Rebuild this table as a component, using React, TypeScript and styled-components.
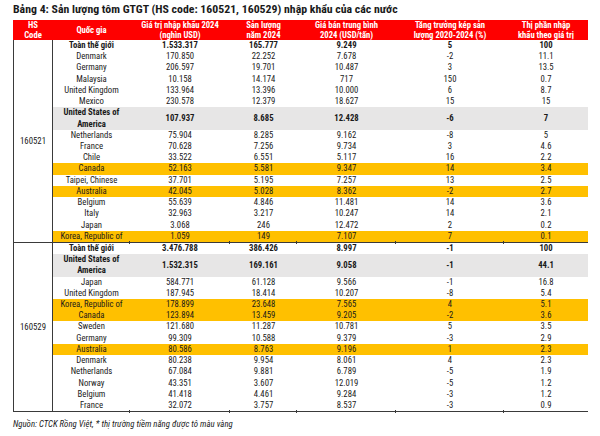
import React from "react";
import styled, { createGlobalStyle } from "styled-components";

const GlobalStyle = createGlobalStyle`
  html, body { margin: 0; padding: 0; background: #ffffff; }
  body {
    font-family: "Roboto Condensed", "Liberation Sans", Arial, sans-serif;
    color: #1a1a1a;
  }
`;

const ROW_H = 11.22;
const COLS = "77px 100px 67px 99px 108px 84px";

const Page = styled.div`
  width: 600px;
  height: 436px;
  box-sizing: border-box;
  padding: 2px 12px 0 13px;
`;

const Title = styled.div`
  font-size: 11.8px;
  font-weight: 700;
  line-height: 14px;
  color: #1a1a1a;
  margin-bottom: 3.5px;
  white-space: nowrap;
`;

const Header = styled.div`
  display: grid;
  grid-template-columns: 40px ${COLS};
  width: 575px;
  height: 20.5px;
  background: #fe0000;
`;

const HeadCell = styled.div`
  display: flex;
  align-items: center;
  justify-content: center;
  text-align: center;
  color: #ffffff;
  font-weight: 700;
  font-size: 8.6px;
  line-height: 10px;
  white-space: nowrap;
`;

const Section = styled.div`
  display: flex;
  width: 575px;
  border-bottom: 1px solid #3a3a3a;
`;

const HsCell = styled.div`
  width: 40px;
  box-sizing: border-box;
  border-left: 1px solid #3a3a3a;
  border-right: 1px solid #3a3a3a;
  display: flex;
  align-items: center;
  justify-content: center;
  font-size: 8.8px;
`;

const Rows = styled.div`
  flex: 1;
  display: flex;
  flex-direction: column;
`;

type Tone = "plain" | "gray" | "yellow";

const Row = styled.div<{ $tone: Tone; $span: number; $bold: boolean }>`
  display: grid;
  grid-template-columns: ${COLS};
  height: ${(p) => p.$span * ROW_H}px;
  background: ${(p) =>
    p.$tone === "gray" ? "#e7e6e6" : p.$tone === "yellow" ? "#ffc000" : "transparent"};
  font-weight: ${(p) => (p.$bold ? 700 : 400)};
  font-size: 8.7px;
`;

const Cell = styled.div<{ $tick?: boolean }>`
  position: relative;
  display: flex;
  align-items: center;
  justify-content: center;
  text-align: center;
  line-height: ${ROW_H}px;
  white-space: nowrap;
  ${(p) =>
    p.$tick
      ? `&::after {
    content: "";
    position: absolute;
    right: 0;
    bottom: -2px;
    width: 1px;
    height: 3px;
    background: #3a3a3a;
  }`
      : ""}
`;

const Note = styled.div`
  margin-top: 6px;
  font-size: 8.8px;
  font-style: italic;
  line-height: 12px;
  color: #1a1a1a;
  white-space: nowrap;
`;

type R = {
  name: string;
  vals: string[];
  tone?: Tone;
  bold?: boolean;
  span?: number;
};

const s1: R[] = [
  { name: "Toàn thế giới", vals: ["1.533.317", "165.777", "9.249", "5", "100"], bold: true },
  { name: "Denmark", vals: ["170.850", "22.252", "7.678", "-2", "11.1"] },
  { name: "Germany", vals: ["206.597", "19.701", "10.487", "3", "13.5"] },
  { name: "Malaysia", vals: ["10.158", "14.174", "717", "150", "0.7"] },
  { name: "United Kingdom", vals: ["133.964", "13.396", "10.000", "6", "8.7"] },
  { name: "Mexico", vals: ["230.578", "12.379", "18.627", "15", "15"] },
  { name: "United States of\nAmerica", vals: ["107.937", "8.685", "12.428", "-6", "7"], tone: "gray", bold: true, span: 2 },
  { name: "Netherlands", vals: ["75.904", "8.285", "9.162", "-8", "5"] },
  { name: "France", vals: ["70.628", "7.256", "9.734", "3", "4.6"] },
  { name: "Chile", vals: ["33.522", "6.551", "5.117", "16", "2.2"] },
  { name: "Canada", vals: ["52.163", "5.581", "9.347", "14", "3.4"], tone: "yellow" },
  { name: "Taipei, Chinese", vals: ["37.701", "5.195", "7.257", "13", "2.5"] },
  { name: "Australia", vals: ["42.045", "5.028", "8.362", "-2", "2.7"], tone: "yellow" },
  { name: "Belgium", vals: ["55.639", "4.846", "11.481", "14", "3.6"] },
  { name: "Italy", vals: ["32.963", "3.217", "10.247", "14", "2.1"] },
  { name: "Japan", vals: ["3.068", "246", "12.472", "2", "0.2"] },
  { name: "Korea, Republic of", vals: ["1.059", "149", "7.107", "7", "0.1"], tone: "yellow" },
];

const s2: R[] = [
  { name: "Toàn thế giới", vals: ["3.476.788", "386.426", "8.997", "-1", "100"], bold: true },
  { name: "United States of\nAmerica", vals: ["1.532.315", "169.161", "9.058", "-1", "44.1"], tone: "gray", bold: true, span: 2 },
  { name: "Japan", vals: ["584.771", "61.128", "9.566", "-1", "16.8"] },
  { name: "United Kingdom", vals: ["187.945", "18.414", "10.207", "-8", "5.4"] },
  { name: "Korea, Republic of", vals: ["178.899", "23.648", "7.565", "4", "5.1"], tone: "yellow" },
  { name: "Canada", vals: ["123.894", "13.459", "9.205", "-2", "3.6"], tone: "yellow" },
  { name: "Sweden", vals: ["121.680", "11.287", "10.781", "5", "3.5"] },
  { name: "Germany", vals: ["99.309", "10.588", "9.379", "-3", "2.9"] },
  { name: "Australia", vals: ["80.586", "8.763", "9.196", "1", "2.3"], tone: "yellow" },
  { name: "Denmark", vals: ["80.238", "9.954", "8.061", "4", "2.3"] },
  { name: "Netherlands", vals: ["67.084", "9.881", "6.789", "-5", "1.9"] },
  { name: "Norway", vals: ["43.351", "3.607", "12.019", "-5", "1.2"] },
  { name: "Belgium", vals: ["41.418", "4.461", "9.284", "-3", "1.2"] },
  { name: "France", vals: ["32.072", "3.757", "8.537", "-3", "0.9"] },
];

const NameText = styled.span`
  white-space: pre;
  line-height: ${ROW_H}px;
`;

function TableSection({ code, rows }: { code: string; rows: R[] }) {
  return (
    <Section>
      <HsCell>{code}</HsCell>
      <Rows>
        {rows.map((r, i) => {
          const last = i === rows.length - 1;
          return (
            <Row key={i} $tone={r.tone ?? "plain"} $span={r.span ?? 1} $bold={!!r.bold}>
              <Cell $tick={last}>
                <NameText>{r.name}</NameText>
              </Cell>
              {r.vals.map((v, j) => (
                <Cell key={j} $tick={last && j < r.vals.length - 1}>
                  {v}
                </Cell>
              ))}
            </Row>
          );
        })}
      </Rows>
    </Section>
  );
}

export default function App() {
  return (
    <Page>
      <GlobalStyle />
      <Title>Bảng 4: Sản lượng tôm GTGT (HS code: 160521, 160529) nhập khẩu của các nước</Title>
      <Header>
        <HeadCell>HS<br />Code</HeadCell>
        <HeadCell>Quốc gia</HeadCell>
        <HeadCell>Giá trị nhập khẩu 2024<br />(nghìn USD)</HeadCell>
        <HeadCell>Sản lượng<br />năm 2024</HeadCell>
        <HeadCell>Giá bán trung bình<br />2024 (USD/tấn)</HeadCell>
        <HeadCell>Tăng trưởng kép sản<br />lượng 2020-2024 (%)</HeadCell>
        <HeadCell>Thị phần nhập<br />khẩu theo giá trị</HeadCell>
      </Header>
      <TableSection code="160521" rows={s1} />
      <TableSection code="160529" rows={s2} />
      <Note>Nguồn: CTCK Rồng Việt, * thị trường tiềm năng được tô màu vàng</Note>
    </Page>
  );
}
